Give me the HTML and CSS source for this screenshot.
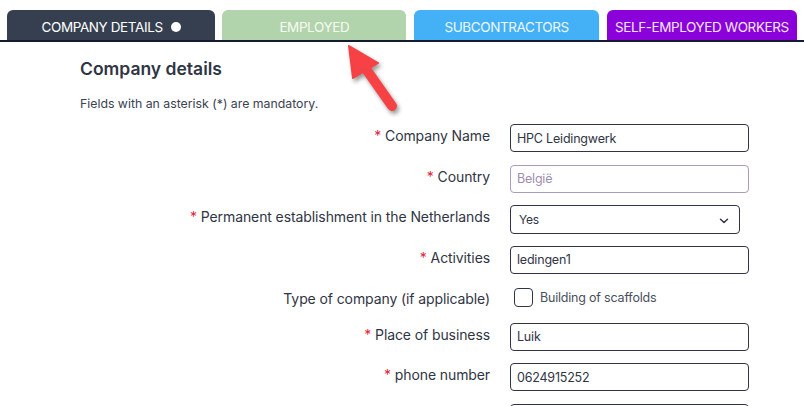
FILE: index.html
```html
<!DOCTYPE html>
<html>
<head>
<meta charset="utf-8">
<link rel="stylesheet" href="styles.css">
</head>
<body>
<nav class="tabs">
  <div class="tab tab-company">COMPANY DETAILS <span class="dot"></span></div>
  <div class="tab tab-employed">EMPLOYED</div>
  <div class="tab tab-sub">SUBCONTRACTORS</div>
  <div class="tab tab-self">SELF-EMPLOYED WORKERS</div>
</nav>
<main class="content">
  <h1 class="title">Company details</h1>
  <p class="note">Fields with an asterisk (*) are mandatory.</p>
  <form class="form">
    <div class="row">
      <label class="label"><span class="req">*</span> Company Name</label>
      <div class="field">HPC Leidingwerk</div>
    </div>
    <div class="row">
      <label class="label"><span class="req">*</span> Country</label>
      <div class="field field-muted">België</div>
    </div>
    <div class="row">
      <label class="label"><span class="req">*</span> Permanent establishment in the Netherlands</label>
      <div class="field select">Yes
        <svg class="chev" width="10" height="6" viewBox="0 0 10 6"><path d="M1.5 1.2 L5 4.5 L8.5 1.2" fill="none" stroke="#2f3544" stroke-width="1.5" stroke-linecap="round" stroke-linejoin="round"/></svg>
      </div>
    </div>
    <div class="row">
      <label class="label"><span class="req">*</span> Activities</label>
      <div class="field">ledingen1</div>
    </div>
    <div class="row row-check">
      <label class="label">Type of company (if applicable)</label>
      <div class="check-wrap"><span class="checkbox"></span><span class="check-text">Building of scaffolds</span></div>
    </div>
    <div class="row">
      <label class="label"><span class="req">*</span> Place of business</label>
      <div class="field">Luik</div>
    </div>
    <div class="row">
      <label class="label"><span class="req">*</span> phone number</label>
      <div class="field">0624915252</div>
    </div>
    <div class="row">
      <label class="label"></label>
      <div class="field"></div>
    </div>
  </form>
</main>
<svg class="arrow" width="70" height="80" viewBox="0 0 70 80">
  <line x1="26" y1="29" x2="52" y2="66" stroke="#f64245" stroke-width="10" stroke-linecap="round"/>
  <polygon points="9,6 38,23 13,38" fill="#f64245" stroke="#f64245" stroke-width="2" stroke-linejoin="round"/>
</svg>
</body>
</html>
```
FILE: styles.css
```css
html, body { margin: 0; padding: 0; background: #ffffff; overflow: hidden; }
body { font-family: Inter, "Noto Sans", sans-serif; color: #2f3544; width: 804px; height: 406px; position: relative; }

.tabs {
  display: flex;
  padding: 10px 0 0 7px;
  border-bottom: 2px solid #161a30;
  height: 30px;
}
.tab {
  height: 30px;
  border-radius: 6px 6px 0 0;
  display: flex;
  align-items: center;
  justify-content: center;
  padding-top: 4px;
  font-size: 13.5px;
  letter-spacing: -0.4px;
  color: #ffffff;
  margin-right: 7px;
  box-sizing: border-box;
}
.tab-company { width: 209px; background: #353f4f; }
.tab-employed { width: 185px; background: #b2d4ad; color: #f6faf3; margin-right: 8px; }
.tab-sub { width: 185px; background: #44b1f6; color: #eef7ff; margin-right: 8px; }
.tab-self { width: 191px; background: #8a02d9; color: #f3e6ff; }
.dot { width: 10px; height: 10px; border-radius: 50%; background: #ffffff; margin-left: 8px; display: inline-block; }

.content { padding: 16px 0 0 80px; }
.title { margin: 0; font-size: 17.5px; font-weight: 600; color: #2f3544; line-height: 22px; }
.note { margin: 16px 0 0; font-size: 12.3px; color: #3b4252; line-height: 16px; }

.form { margin-top: 12px; }
.row {
  display: grid;
  grid-template-columns: 410px 239px;
  column-gap: 20px;
  height: 28px;
  margin-bottom: 12.5px;
}
.label {
  text-align: right;
  font-size: 14px;
  line-height: 20px;
  padding-top: 2px;
  color: #2f3544;
  letter-spacing: -0.1px;
}
.req { color: #e0263a; }
.field {
  box-sizing: border-box;
  height: 28px;
  border: 1px solid #2f3544;
  border-radius: 4px;
  padding: 0 6px;
  display: flex;
  align-items: center;
  font-size: 12.5px;
  letter-spacing: -0.2px;
  color: #2f3544;
}
.field-muted { border-color: #ab9cbd; color: #a08db0; }
.select { width: 230px; height: 29px; padding-left: 8px; font-size: 12px; position: relative; }
.chev { position: absolute; right: 10px; top: 12px; }

.row-check { height: 24px; margin-bottom: 12.5px; }
.row-check .label { padding-top: 3px; }
.check-wrap { display: flex; align-items: center; padding: 2px 0 0 4px; height: 19px; }
.checkbox {
  width: 19px; height: 19px;
  box-sizing: border-box;
  border: 1.5px solid #2f3544;
  border-radius: 4px;
}
.check-text { margin-left: 7px; font-size: 12.5px; color: #4a4f5c; letter-spacing: -0.2px; }

.arrow {
  position: absolute;
  left: 340px;
  top: 40px;
  filter: drop-shadow(2px 3px 2px rgba(0,0,0,0.4));
}
```
